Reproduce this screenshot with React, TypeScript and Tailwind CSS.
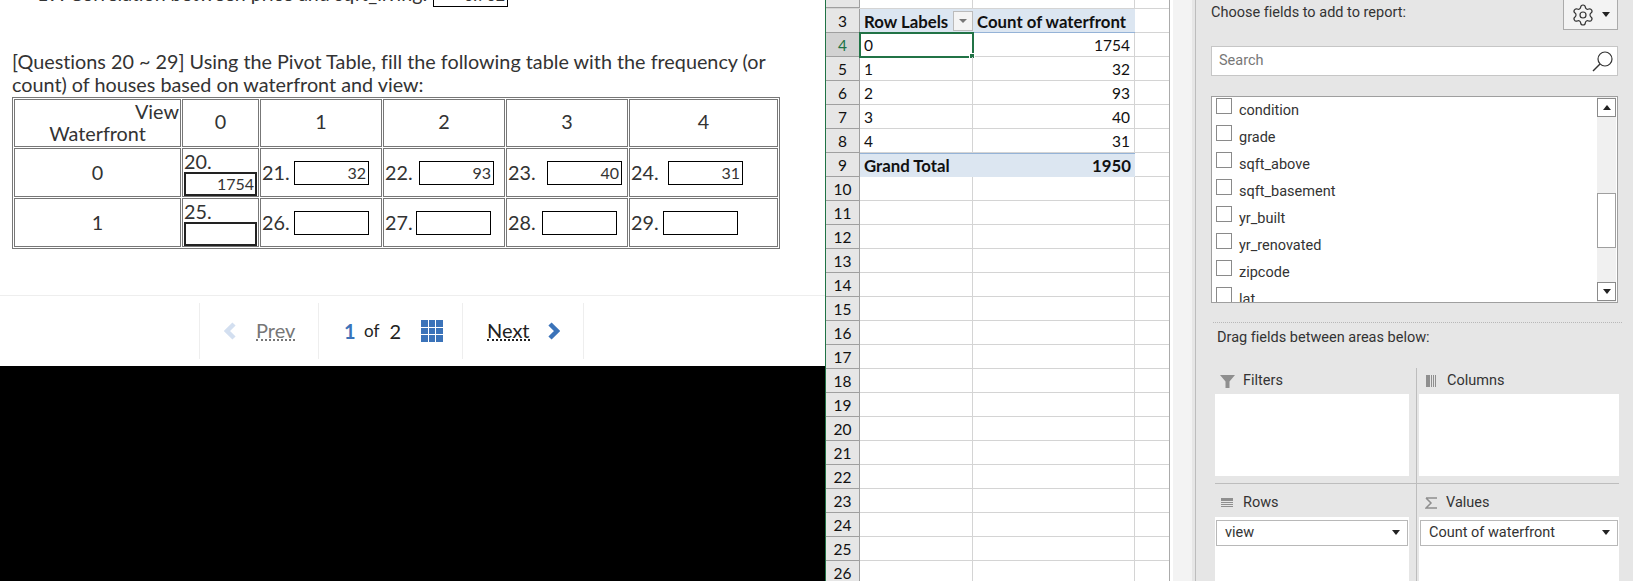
import { Settings } from 'lucide-react';

const cols = [
  { n: '21.', v: '32', w: 'w-[32px]' },
  { n: '22.', v: '93', w: 'w-[34px]' },
  { n: '23.', v: '40', w: 'w-[39px]' },
  { n: '24.', v: '31', w: 'w-[37px]' },
];
const cols2 = [
  { n: '26.', v: '', w: 'w-[32px]' },
  { n: '27.', v: '', w: 'w-[31px]' },
  { n: '28.', v: '', w: 'w-[34px]' },
  { n: '29.', v: '', w: 'w-[32px]' },
];
const fields = ['condition', 'grade', 'sqft_above', 'sqft_basement', 'yr_built', 'yr_renovated', 'zipcode', 'lat'];
const pivot = [
  ['0', '1754'],
  ['1', '32'],
  ['2', '93'],
  ['3', '40'],
  ['4', '31'],
];
const extraRows = [10, 11, 12, 13, 14, 15, 16, 17, 18, 19, 20, 21, 22, 23, 24, 25, 26];

function Answer({ n, v, w }: { n: string; v: string; w: string }) {
  return (
    <td className="border border-[#777] px-[1px] text-left">
      <div className="flex items-center">
        <span className={`${w} min-w-0 shrink-0 whitespace-nowrap`}>{n}</span>
        <div className="w-[75px] h-[24px] border border-black text-right text-[16px] leading-[22px] pr-[2px] mt-[1px]">{v}</div>
      </div>
    </td>
  );
}

function RowHead({ n, active }: { n: number; active?: boolean }) {
  return (
    <div className={`w-[34px] h-[24px] shrink-0 border-r border-b border-[#9f9f9f] text-center leading-[24px] ${active ? 'bg-[#d2d2d2] text-[#217346]' : 'bg-[#e6e6e6]'}`}>
      {n}
    </div>
  );
}

function Chip({ label }: { label: string }) {
  return (
    <div className="mx-[1px] mt-[2px] h-[26px] border border-[#b8b8b8] flex items-center justify-between pl-[8px] pr-[7px]">
      <span>{label}</span>
      <Caret />
    </div>
  );
}

function Caret() {
  return <div className="w-0 h-0 border-x-[4.5px] border-x-transparent border-t-[5px] border-t-[#222]" />;
}

export default function App() {
  return (
    <div className="w-[1633px] h-[581px] flex overflow-hidden bg-white [font-variant-ligatures:none]">
      {/* question pane */}
      <div className="w-[825px] shrink-0 flex flex-col font-['Lato',sans-serif] text-[#333]">
        <div className="h-[366px] bg-white overflow-hidden">
          <div className="h-[7px] relative overflow-hidden">
            <div className="absolute bottom-[2px] left-[37px] text-[19.6px] leading-[23px] whitespace-nowrap">
              19. Correlation between price and sqft_living:
            </div>
            <div className="absolute bottom-0 left-[433px] w-[75px] h-[24px] border border-black text-right text-[16px] leading-[22px] pr-[2px]">0.702</div>
          </div>
          <p className="mt-[43px] ml-[12px] w-[790px] text-[19.8px] leading-[23px]">
            [Questions 20 ~ 29] Using the Pivot Table, fill the following table with the frequency (or count) of houses based on waterfront and view:
          </p>
          <table className="mt-[1px] ml-[12px] w-[768px] h-[151px] table-fixed border-separate border-spacing-[1px] border border-[#777] text-[19.8px] leading-[23px] text-center">
            <colgroup>
              <col className="w-[167px]" />
              <col className="w-[77px]" />
              <col className="w-[122px]" />
              <col className="w-[122px]" />
              <col className="w-[122px]" />
              <col className="w-[149px]" />
            </colgroup>
            <tbody>
              <tr className="h-[48px]">
                <td className="border border-[#777] pb-[2px] leading-[22px]">
                  <div className="text-right pr-[1px]">View</div>
                  <div>Waterfront</div>
                </td>
                {['0', '1', '2', '3', '4'].map((c) => (
                  <td key={c} className="border border-[#777] pb-[4px]">{c}</td>
                ))}
              </tr>
              <tr className="h-[49px]">
                <td className="border border-[#777]">0</td>
                <td className="border border-[#777] px-[1px] text-left">
                  <div className="leading-[22px]">20.</div>
                  <div className="h-[24px] border-2 border-[#222] text-right text-[16px] leading-[20px] pr-[1px]">1754</div>
                </td>
                {cols.map((c) => <Answer key={c.n} {...c} />)}
              </tr>
              <tr className="h-[49px]">
                <td className="border border-[#777]">1</td>
                <td className="border border-[#777] px-[1px] text-left">
                  <div className="leading-[22px]">25.</div>
                  <div className="h-[24px] border-2 border-[#222]" />
                </td>
                {cols2.map((c) => <Answer key={c.n} {...c} />)}
              </tr>
            </tbody>
          </table>
          <div className="mt-[46px] border-t border-[#eee] pt-[7px] pl-[199px]">
            <div className="h-[56px] w-[386px] flex items-center text-[20px]">
              <div className="w-[120px] h-full border-x border-[#eee] flex items-center pl-[24px]">
                <svg width="13" height="18" viewBox="0 0 13 18" className="mr-[19px]">
                  <path d="M10 2 L3 9 L10 16" fill="none" stroke="#d3dff0" strokeWidth="4.5" />
                </svg>
                <span className="text-[#777] border-b-2 border-dotted border-[#777] leading-[17px]">Prev</span>
              </div>
              <div className="w-[144px] h-full border-r border-[#eee] flex items-center pl-[25px]">
                <span className="font-bold text-[#3b73b9] w-[20px]">1</span>
                <span className="text-[17px] text-[#222] mr-[10px]">of</span>
                <span className="text-[#222] mr-[20px]">2</span>
                <div className="grid grid-cols-3 gap-[1px] w-[22px] h-[22px]">
                  {[1, 2, 3, 4, 5, 6, 7, 8, 9].map((i) => (
                    <div key={i} className="bg-[#3b73b9]" />
                  ))}
                </div>
              </div>
              <div className="w-[121px] h-full border-r border-[#eee] flex items-center pl-[24px]">
                <span className="text-[#222] border-b-2 border-dotted border-[#222] leading-[17px]">Next</span>
                <svg width="13" height="18" viewBox="0 0 13 18" className="ml-[17px]">
                  <path d="M3 2 L10 9 L3 16" fill="none" stroke="#3b73b9" strokeWidth="4.5" />
                </svg>
              </div>
            </div>
          </div>
        </div>
        <div className="flex-1 bg-black" />
      </div>

      {/* excel sheet */}
      <div className="w-[344px] shrink-0 border-l border-[#217346] font-['Lato',sans-serif] text-[15.5px] text-[#111] overflow-hidden">
        <div className="flex h-[9px] border-b border-[#d4d4d4] overflow-hidden">
          <div className="w-[34px] bg-[#e6e6e6] border-r border-b border-[#9f9f9f]" />
          <div className="w-[113px] border-r border-[#d4d4d4]" />
          <div className="w-[162px] border-r border-[#d4d4d4]" />
        </div>
        <div className="flex">
          <RowHead n={3} />
          <div className="w-[275px] h-[24px] bg-[#dce6f1] border-b border-[#95b3d7] flex items-center font-bold text-[16.8px]">
            <div className="w-[113px] pl-[4px] flex items-center justify-between">
              <span className="pt-[2px] whitespace-nowrap">Row Labels</span>
              <div className="w-[20px] h-[20px] shrink-0 bg-[#f4f4f4] border border-[#bbb] flex items-center justify-center">
                <div className="w-0 h-0 border-x-[4px] border-x-transparent border-t-[4px] border-t-[#777]" />
              </div>
            </div>
            <span className="pl-[4px] pt-[2px] whitespace-nowrap">Count of waterfront</span>
          </div>
          <div className="w-[34px] h-[24px] border-b border-[#d4d4d4]" />
        </div>
        {pivot.map(([k, v], i) => (
          <div key={k} className="flex">
            <RowHead n={i + 4} active={i === 0} />
            <div className="relative w-[113px] h-[24px] border-r border-b border-[#d4d4d4] pl-[4px] leading-[24px]">
              {k}
              {i === 0 && (
                <div className="absolute -left-[1px] -top-[1px] w-[115px] h-[26px] border-2 border-[#217346]">
                  <div className="absolute -right-[3px] -bottom-[3px] w-[6px] h-[6px] bg-[#217346] border border-white" />
                </div>
              )}
            </div>
            <div className="w-[162px] h-[24px] border-r border-b border-[#d4d4d4] text-right pr-[4px] leading-[24px]">{v}</div>
            <div className="w-[34px] h-[24px] border-b border-[#d4d4d4]" />
          </div>
        ))}
        <div className="flex">
          <RowHead n={9} />
          <div className="w-[275px] h-[24px] bg-[#dce6f1] border-t border-[#95b3d7] flex items-center justify-between px-[4px] font-bold text-[16.8px]">
            <span>Grand Total</span>
            <span>1950</span>
          </div>
          <div className="w-[34px] h-[24px] border-b border-[#d4d4d4]" />
        </div>
        {extraRows.map((n) => (
          <div key={n} className="flex">
            <RowHead n={n} />
            <div className="w-[113px] h-[24px] border-r border-b border-[#d4d4d4]" />
            <div className="w-[162px] h-[24px] border-r border-b border-[#d4d4d4]" />
            <div className="w-[34px] h-[24px] border-b border-[#d4d4d4]" />
          </div>
        ))}
      </div>

      {/* gap strip between sheet and field list */}
      <div className="w-[26px] shrink-0 flex border-l border-[#ababab]">
        <div className="w-[3px] bg-white" />
        <div className="w-[19px] bg-[#f3f3f3]" />
        <div className="w-[3px] bg-[#e6e6e6]" />
      </div>

      {/* pivot field list */}
      <div className="flex-1 bg-[#e6e6e6] border-l border-[#bdbdbd] font-['Roboto',sans-serif] text-[14.5px] text-[#333] pl-[15px] pr-[15px] overflow-hidden">
        <div className="flex items-start justify-between h-[46px]">
          <span className="mt-[2px]">Choose fields to add to report:</span>
          <div className="w-[55px] h-[30px] bg-[#f3f3f3] border border-[#ababab] border-t-0 flex items-center justify-center gap-[7px]">
            <Settings size={24} strokeWidth={1.2} />
            <Caret />
          </div>
        </div>
        <div className="h-[30px] bg-white border border-[#c6c6c6] flex items-center justify-between pl-[7px] pr-[4px] text-[#777]">
          <span>Search</span>
          <svg width="21" height="21" viewBox="0 0 21 21">
            <circle cx="13" cy="8" r="7" fill="none" stroke="#333" strokeWidth="1.2" />
            <path d="M8 13 L1 20" fill="none" stroke="#333" strokeWidth="1.4" />
          </svg>
        </div>
        <div className="mt-[20px] h-[207px] bg-white border border-[#9f9f9f] flex justify-between overflow-hidden">
          <div className="pl-[4px]">
            {fields.map((f) => (
              <div key={f} className="h-[27px] flex items-start">
                <div className="w-[16px] h-[16px] mt-[1px] border border-[#8a8a8a] bg-white" />
                <span className="ml-[7px] mt-[4px] leading-[20px]">{f}</span>
              </div>
            ))}
          </div>
          <div className="w-[19px] mr-[1px] bg-[#f0f0f0] flex flex-col justify-between items-stretch py-[1px] relative">
            <div className="h-[19px] bg-white border border-[#8a8a8a] flex items-center justify-center">
              <div className="w-0 h-0 border-x-[4.5px] border-x-transparent border-b-[5px] border-b-[#222]" />
            </div>
            <div className="absolute top-[96px] left-0 right-0 h-[55px] bg-white border border-[#9f9f9f]" />
            <div className="h-[19px] bg-white border border-[#8a8a8a] flex items-center justify-center">
              <Caret />
            </div>
          </div>
        </div>
        <div className="mt-[19px] ml-[2px] w-[409px] border-t border-dotted border-[#b8b8b8]" />
        <div className="mt-[4px] ml-[6px] h-[26px] leading-[22px]">Drag fields between areas below:</div>
        <div className="ml-[4px] w-[404px] grid grid-cols-[202px_202px] mt-[15px]">
          <div className="h-[116px] pr-[7px] border-r border-b border-[#bdbdbd]">
            <div className="h-[26px] flex items-center">
              <svg width="15" height="15" viewBox="0 0 15 15" className="ml-[5px] mr-[8px]">
                <path d="M0 1 H15 L9.5 7.5 V14 H5.5 V7.5 Z" fill="#8f8f8f" />
              </svg>
              <span>Filters</span>
            </div>
            <div className="h-[82px] bg-white" />
          </div>
          <div className="h-[116px] pl-[2px] border-b border-[#bdbdbd]">
            <div className="h-[26px] flex items-center">
              <svg width="11" height="12" viewBox="0 0 11 12" className="ml-[7px] mr-[10px]">
                <rect x="0" width="4" height="12" fill="#8f8f8f" />
                <rect x="5" width="1" height="12" fill="#8f8f8f" />
                <rect x="7" width="1" height="12" fill="#8f8f8f" />
                <rect x="9" width="1" height="12" fill="#8f8f8f" />
              </svg>
              <span>Columns</span>
            </div>
            <div className="h-[82px] bg-white" />
          </div>
          <div className="pr-[7px] border-r border-[#bdbdbd]">
            <div className="h-[33px] pt-[5px] flex items-center">
              <svg width="12" height="10" viewBox="0 0 12 10" className="ml-[6px] mr-[10px]">
                <rect y="0" width="12" height="3" fill="#8f8f8f" />
                <rect y="4" width="12" height="1" fill="#8f8f8f" />
                <rect y="6" width="12" height="1" fill="#8f8f8f" />
                <rect y="8" width="12" height="1" fill="#8f8f8f" />
              </svg>
              <span>Rows</span>
            </div>
            <div className="h-[70px] bg-white overflow-hidden pt-[0.5px]"><Chip label="view" /></div>
          </div>
          <div className="pl-[2px]">
            <div className="h-[33px] pt-[5px] flex items-center">
              <svg width="13" height="12" viewBox="0 0 13 12" className="ml-[6px] mr-[8px]">
                <path d="M1 1 H12 M1 1 L6 6 L1 11 H12" fill="none" stroke="#8f8f8f" strokeWidth="1.5" />
              </svg>
              <span>Values</span>
            </div>
            <div className="h-[70px] bg-white overflow-hidden pt-[0.5px]"><Chip label="Count of waterfront" /></div>
          </div>
        </div>
      </div>
    </div>
  );
}
